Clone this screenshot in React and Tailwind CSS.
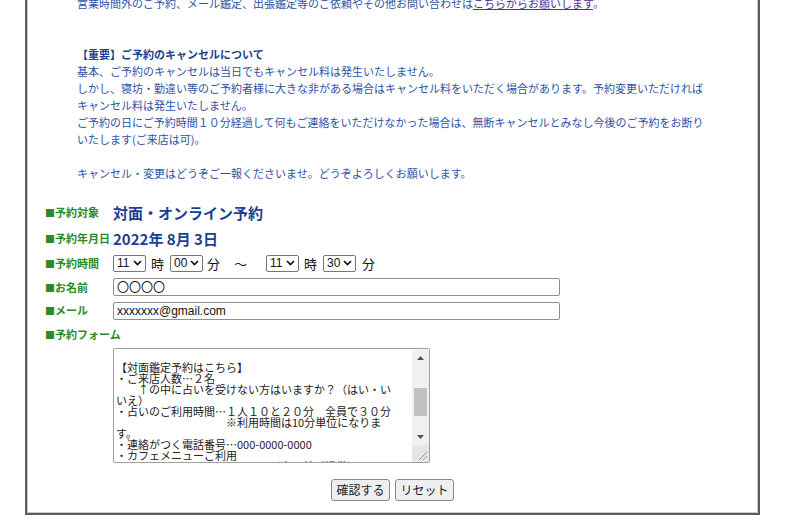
import React from 'react';

const JP = { fontFamily: '"Noto Sans CJK JP", "Noto Sans", sans-serif' };

function Sel({ v }) {
  return (
    <div className="inline-flex h-[17px] w-[33px] items-center justify-between rounded-[2px] border border-[#767676] bg-white pl-[3px] pr-[3px] text-[12px] leading-none text-[#111] [font-family:'Liberation_Sans',sans-serif]">
      <span>{v}</span>
      <svg width="9" height="6" viewBox="0 0 9 6">
        <path d="M1 1l3.5 3.5L8 1" fill="none" stroke="#111" strokeWidth="1.7" />
      </svg>
    </div>
  );
}

function Label({ children }) {
  return (
    <div className="w-[68px] shrink-0 whitespace-nowrap text-[11px] font-bold leading-none text-[#2b8a2b]">
      <span className="text-[10px]">■</span>
      {children}
    </div>
  );
}

const taLines = [
  '',
  '【対面鑑定予約はこちら】',
  '・ご来店人数…２名',
  '　　↑の中に占いを受けない方はいますか？（はい・い',
  'いえ）',
  '・占いのご利用時間…１人１０と２０分　全員で３０分',
  '　　　　　　　　　　※利用時間は10分単位になりま',
  'す。',
  '・連絡がつく電話番号…000-0000-0000',
  '・カフェメニューご利用',
  '　　　　　ドリンク＆スイーツ（占い前ご提供）',
];

export default function App() {
  return (
    <div className="relative h-[528px] w-[800px] overflow-hidden bg-white" style={JP}>
      <div className="flow-root ml-[25px] h-[515px] w-[735px] border-2 border-t-0 border-[#5c5c5c] shadow-[inset_1px_-1px_0_#c8c8c8,inset_-1px_0_0_#c8c8c8]">
        {/* notice text */}
        <div className="-mt-[5px] whitespace-nowrap pl-[50px] text-[11px] leading-[17px] text-[#2f52a3]">
          <div>
            営業時間外のご予約、メール鑑定、出張鑑定等のご依頼やその他お問い合わせは
            <a href="#" className="text-[#5b2b8f] underline">こちらからお願いします</a>。
          </div>
          <div className="h-[17px]" />
          <div className="h-[17px]" />
          <div className="font-bold text-[#1e3f8e]">【重要】ご予約のキャンセルについて</div>
          <div>基本、ご予約のキャンセルは当日でもキャンセル料は発生いたしません。</div>
          <div>しかし、寝坊・勤違い等のご予約者様に大きな非がある場合はキャンセル料をいただく場合があります。予約変更いただければ</div>
          <div>キャンセル料は発生いたしません。</div>
          <div>ご予約の日にご予約時間１０分経過して何もご連絡をいただけなかった場合は、無断キャンセルとみなし今後のご予約をお断り</div>
          <div>いたします(ご来店は可)。</div>
          <div className="h-[17px]" />
          <div>キャンセル・変更はどうぞご一報くださいませ。どうぞよろしくお願いします。</div>
        </div>

        {/* form */}
        <div className="mt-[17px] pl-[18px]">
          <div className="flex h-[26px] items-center">
            <Label>予約対象</Label>
            <div className="text-[15px] font-bold leading-none text-[#1b3f94]">対面・オンライン予約</div>
          </div>
          <div className="flex h-[26px] items-center">
            <Label>予約年月日</Label>
            <div className="text-[15px] font-bold leading-none text-[#1b3f94]">2022年 8月 3日</div>
          </div>
          <div className="flex h-[24px] items-center">
            <Label>予約時間</Label>
            <div className="flex items-center text-[13px] leading-none text-[#111]">
              <Sel v="11" />
              <span className="ml-[5px]">時</span>
              <span className="ml-[6px]"><Sel v="00" /></span>
              <span className="ml-[4px]">分</span>
              <span className="ml-[14px]">～</span>
              <span className="ml-[19px]"><Sel v="11" /></span>
              <span className="ml-[5px]">時</span>
              <span className="ml-[6px]"><Sel v="30" /></span>
              <span className="ml-[6px]">分</span>
            </div>
          </div>
          <div className="flex h-[24px] items-center">
            <Label>お名前</Label>
            <div className="flex h-[18px] w-[447px] items-center rounded-[2px] border border-[#8f8f8f] pl-[3px] text-[12px] leading-none text-[#111]">
              〇〇〇〇
            </div>
          </div>
          <div className="flex h-[23px] items-center">
            <Label>メール</Label>
            <div className="flex h-[18px] w-[447px] items-center rounded-[2px] border border-[#8f8f8f] pl-[3px] text-[12px] leading-none text-[#111] [font-family:'Liberation_Sans',sans-serif]">
              xxxxxxx@gmail.com
            </div>
          </div>
          <div className="flex h-[24px] items-center">
            <Label>予約フォーム</Label>
          </div>
          <div className="mt-[2px] flex">
            <div className="w-[68px] shrink-0" />
            <div className="flex h-[115px] w-[317px] overflow-hidden rounded-[2px] border border-[#a0a0a0] bg-white">
              <div className="flex-1 overflow-hidden whitespace-pre pl-[2px] pt-[2px] text-[11px] leading-[11px] text-[#222]">
                {taLines.map((l, i) => (
                  <div key={i} className="h-[11px]">{l}</div>
                ))}
              </div>
              <div className="flex w-[17px] shrink-0 flex-col bg-[#f1f1f1]">
                <div className="flex h-[17px] items-center justify-center">
                  <svg width="7" height="4" viewBox="0 0 7 4"><path d="M0 4L3.5 0L7 4Z" fill="#505050" /></svg>
                </div>
                <div className="relative flex-1">
                  <div className="absolute left-[2px] right-[2px] top-[22px] h-[28px] bg-[#c1c1c1]" />
                </div>
                <div className="flex h-[17px] items-center justify-center">
                  <svg width="7" height="4" viewBox="0 0 7 4"><path d="M0 0L3.5 4L7 0Z" fill="#505050" /></svg>
                </div>
                <div className="flex h-[17px] items-end justify-end bg-[#e6e6e6] p-[2px]">
                  <svg width="10" height="10" viewBox="0 0 10 10">
                    <path d="M10 2L2 10M10 6L6 10" stroke="#9a9a9a" strokeWidth="1" />
                  </svg>
                </div>
              </div>
            </div>
          </div>
        </div>

        {/* buttons */}
        <div className="mt-[16px] flex justify-center gap-[5px]">
          <button className="h-[22px] w-[59px] rounded-[3px] border border-[#8a8a8a] bg-[#efefef] text-[12px] leading-none text-[#222]">確認する</button>
          <button className="h-[22px] w-[59px] rounded-[3px] border border-[#8a8a8a] bg-[#efefef] text-[12px] leading-none text-[#222]">リセット</button>
        </div>
      </div>
    </div>
  );
}
